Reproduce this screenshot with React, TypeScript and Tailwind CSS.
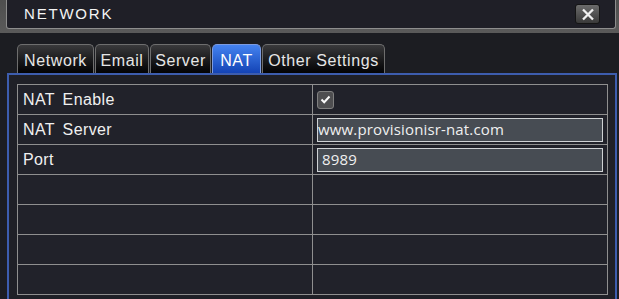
import React from "react";

const tabs = [
  { label: "Network", w: "w-[77px]" },
  { label: "Email", w: "w-[54px]" },
  { label: "Server", w: "w-[61px]" },
  { label: "NAT", w: "w-[49px]", active: true },
  { label: "Other Settings", w: "w-[123px]" },
];

function CloseButton() {
  return (
    <div className="w-[25px] h-[20px] rounded-[3px] border border-[#151515] bg-linear-to-b from-[#6c6c6c] to-[#3a3a3a] flex items-center justify-center">
      <svg width="14" height="13" viewBox="0 0 14 13">
        <path d="M2 1.5 L12 11.5 M12 1.5 L2 11.5" stroke="#f0f0f0" strokeWidth="2.3" />
      </svg>
    </div>
  );
}

function Checkbox() {
  return (
    <div className="w-[17px] h-[18px] rounded-[3px] border border-[#808080] bg-[#4e4e50] flex items-center justify-center">
      <svg width="11" height="9" viewBox="0 0 11 9">
        <path d="M1.5 4.5 L4.2 7.2 L9.5 1.5" fill="none" stroke="#fafafa" strokeWidth="2" />
      </svg>
    </div>
  );
}

function TextBox({ value }: { value: string }) {
  return (
    <div className="h-[24px] w-[286px] border border-[#cfd2d4] bg-[#474c53] flex items-center text-[15px] tracking-[0.15px] text-[#f0f0f0] font-['Open_Sans',sans-serif] leading-none">
      {value}
    </div>
  );
}

export default function App() {
  const rows: { label: string; value: React.ReactNode }[] = [
    { label: "NAT Enable", value: <Checkbox /> },
    { label: "NAT Server", value: <TextBox value="www.provisionisr-nat.com" /> },
    { label: "Port", value: <TextBox value={"\u00a08989"} /> },
    { label: "", value: null },
    { label: "", value: null },
    { label: "", value: null },
    { label: "", value: null },
  ];

  return (
    <div className="w-[619px] h-[299px] overflow-hidden bg-[#1c1d22] font-['Liberation_Sans',Arial,sans-serif] text-white">
      {/* title bar */}
      <div className="bg-linear-to-b from-[#4e4e4e] to-[#5a5a5a] pl-[6px] pr-[3px] pb-[4px]">
        <div className="h-[29px] bg-[#1f1f27] border-x border-b border-[#8d8d8d] rounded-b-[3px] flex items-center justify-between pl-[17px] pr-[15px]">
          <span className="text-[15px] tracking-[1.8px] text-[#f4f4f4]">NETWORK</span>
          <CloseButton />
        </div>
      </div>

      {/* tabs */}
      <div className="flex gap-[1px] pl-[17px] mt-[11px] h-[29px]">
        {tabs.map((t) => (
          <div
            key={t.label}
            className={`${t.w} h-[29px] rounded-t-[5px] border border-b-0 flex items-center justify-center pt-[3px] text-[16px] tracking-[0.6px] ${
              t.active
                ? "border-[#7c9be0] bg-linear-to-b from-[#4583f0] to-[#1443b5] text-white"
                : "border-[#6e6e6e] bg-linear-to-b from-[#3a3a3c] to-[#040405] text-[#e6e6e6]"
            }`}
          >
            {t.label}
          </div>
        ))}
      </div>

      {/* panel */}
      <div className="ml-[7px] mr-[2px] border-2 border-[#3d5dae] bg-[#1f2027] pt-[9px] pl-[8px] h-[240px]">
        <div className="w-[591px] border-t border-l border-r border-[#8f8f8f] bg-[#21222a]">
          {rows.map((r, i) => (
            <div key={i} className="flex h-[30px] border-b border-[#8f8f8f]">
              <div className="w-[295px] border-r border-[#8f8f8f] flex items-center pl-[5px] text-[16px] tracking-[0.4px] [word-spacing:3px] text-[#f0f0f0]">
                {r.label}
              </div>
              <div className="flex-1 flex items-center pl-[4px]">{r.value}</div>
            </div>
          ))}
        </div>
      </div>
    </div>
  );
}
